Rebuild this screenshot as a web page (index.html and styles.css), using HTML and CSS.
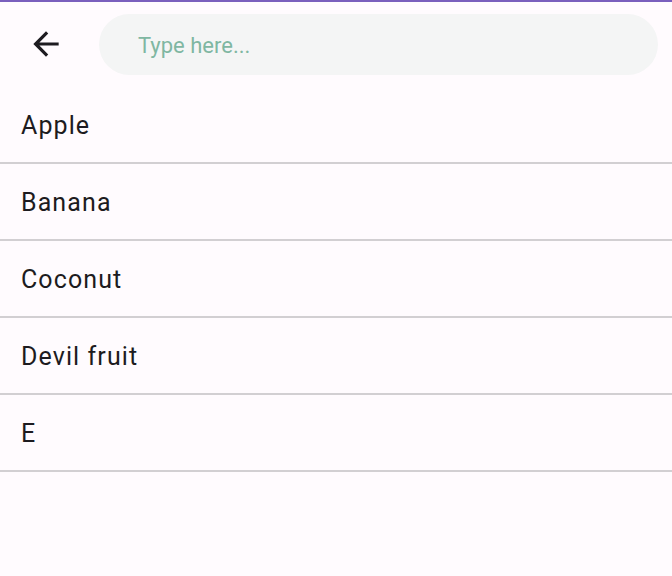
FILE: index.html
```html
<!DOCTYPE html>
<html>
<head>
<meta charset="utf-8">
<link rel="stylesheet" href="styles.css">
</head>
<body>
<div class="topline"></div>
<header class="bar">
  <button class="back" aria-label="Back">
    <svg width="38" height="38" viewBox="0 0 24 24"><path d="M20 11H7.83l5.59-5.59L12 4l-8 8 8 8 1.41-1.41L7.83 13H20v-2z" fill="#1d1b20"/></svg>
  </button>
  <div class="search"><span class="placeholder">Type here...</span></div>
</header>
<ul class="list">
  <li class="item">Apple</li>
  <li class="item">Banana</li>
  <li class="item">Coconut</li>
  <li class="item">Devil fruit</li>
  <li class="item">E</li>
</ul>
</body>
</html>
```
FILE: styles.css
```css
html, body {
  margin: 0;
  padding: 0;
  background: #fffbfe;
  font-family: Roboto, "Noto Sans", sans-serif;
}
.topline {
  height: 2px;
  background: #7a5fbd;
}
.bar {
  display: flex;
  align-items: center;
  height: 85px;
  padding: 0 14px 0 27px;
  gap: 34px;
}
.back {
  width: 38px;
  height: 38px;
  padding: 0;
  margin-top: -1px;
  border: 0;
  background: none;
  display: flex;
  align-items: center;
  justify-content: center;
}
.search {
  flex: 1;
  height: 61px;
  margin-top: -1px;
  border-radius: 31px;
  background: #f4f5f5;
  display: flex;
  align-items: center;
  padding-left: 39px;
}
.placeholder {
  font-size: 22px;
  color: #7fb7a2;
  margin-top: 2px;
}
.list {
  list-style: none;
  margin: 0;
  padding: 0;
}
.item {
  height: 73px;
  padding-top: 2px;
  border-bottom: 2px solid #d2cfd2;
  display: flex;
  align-items: center;
  padding-left: 21px;
  font-size: 25px;
  letter-spacing: 1.1px;
  color: #1d1b20;
}
```
